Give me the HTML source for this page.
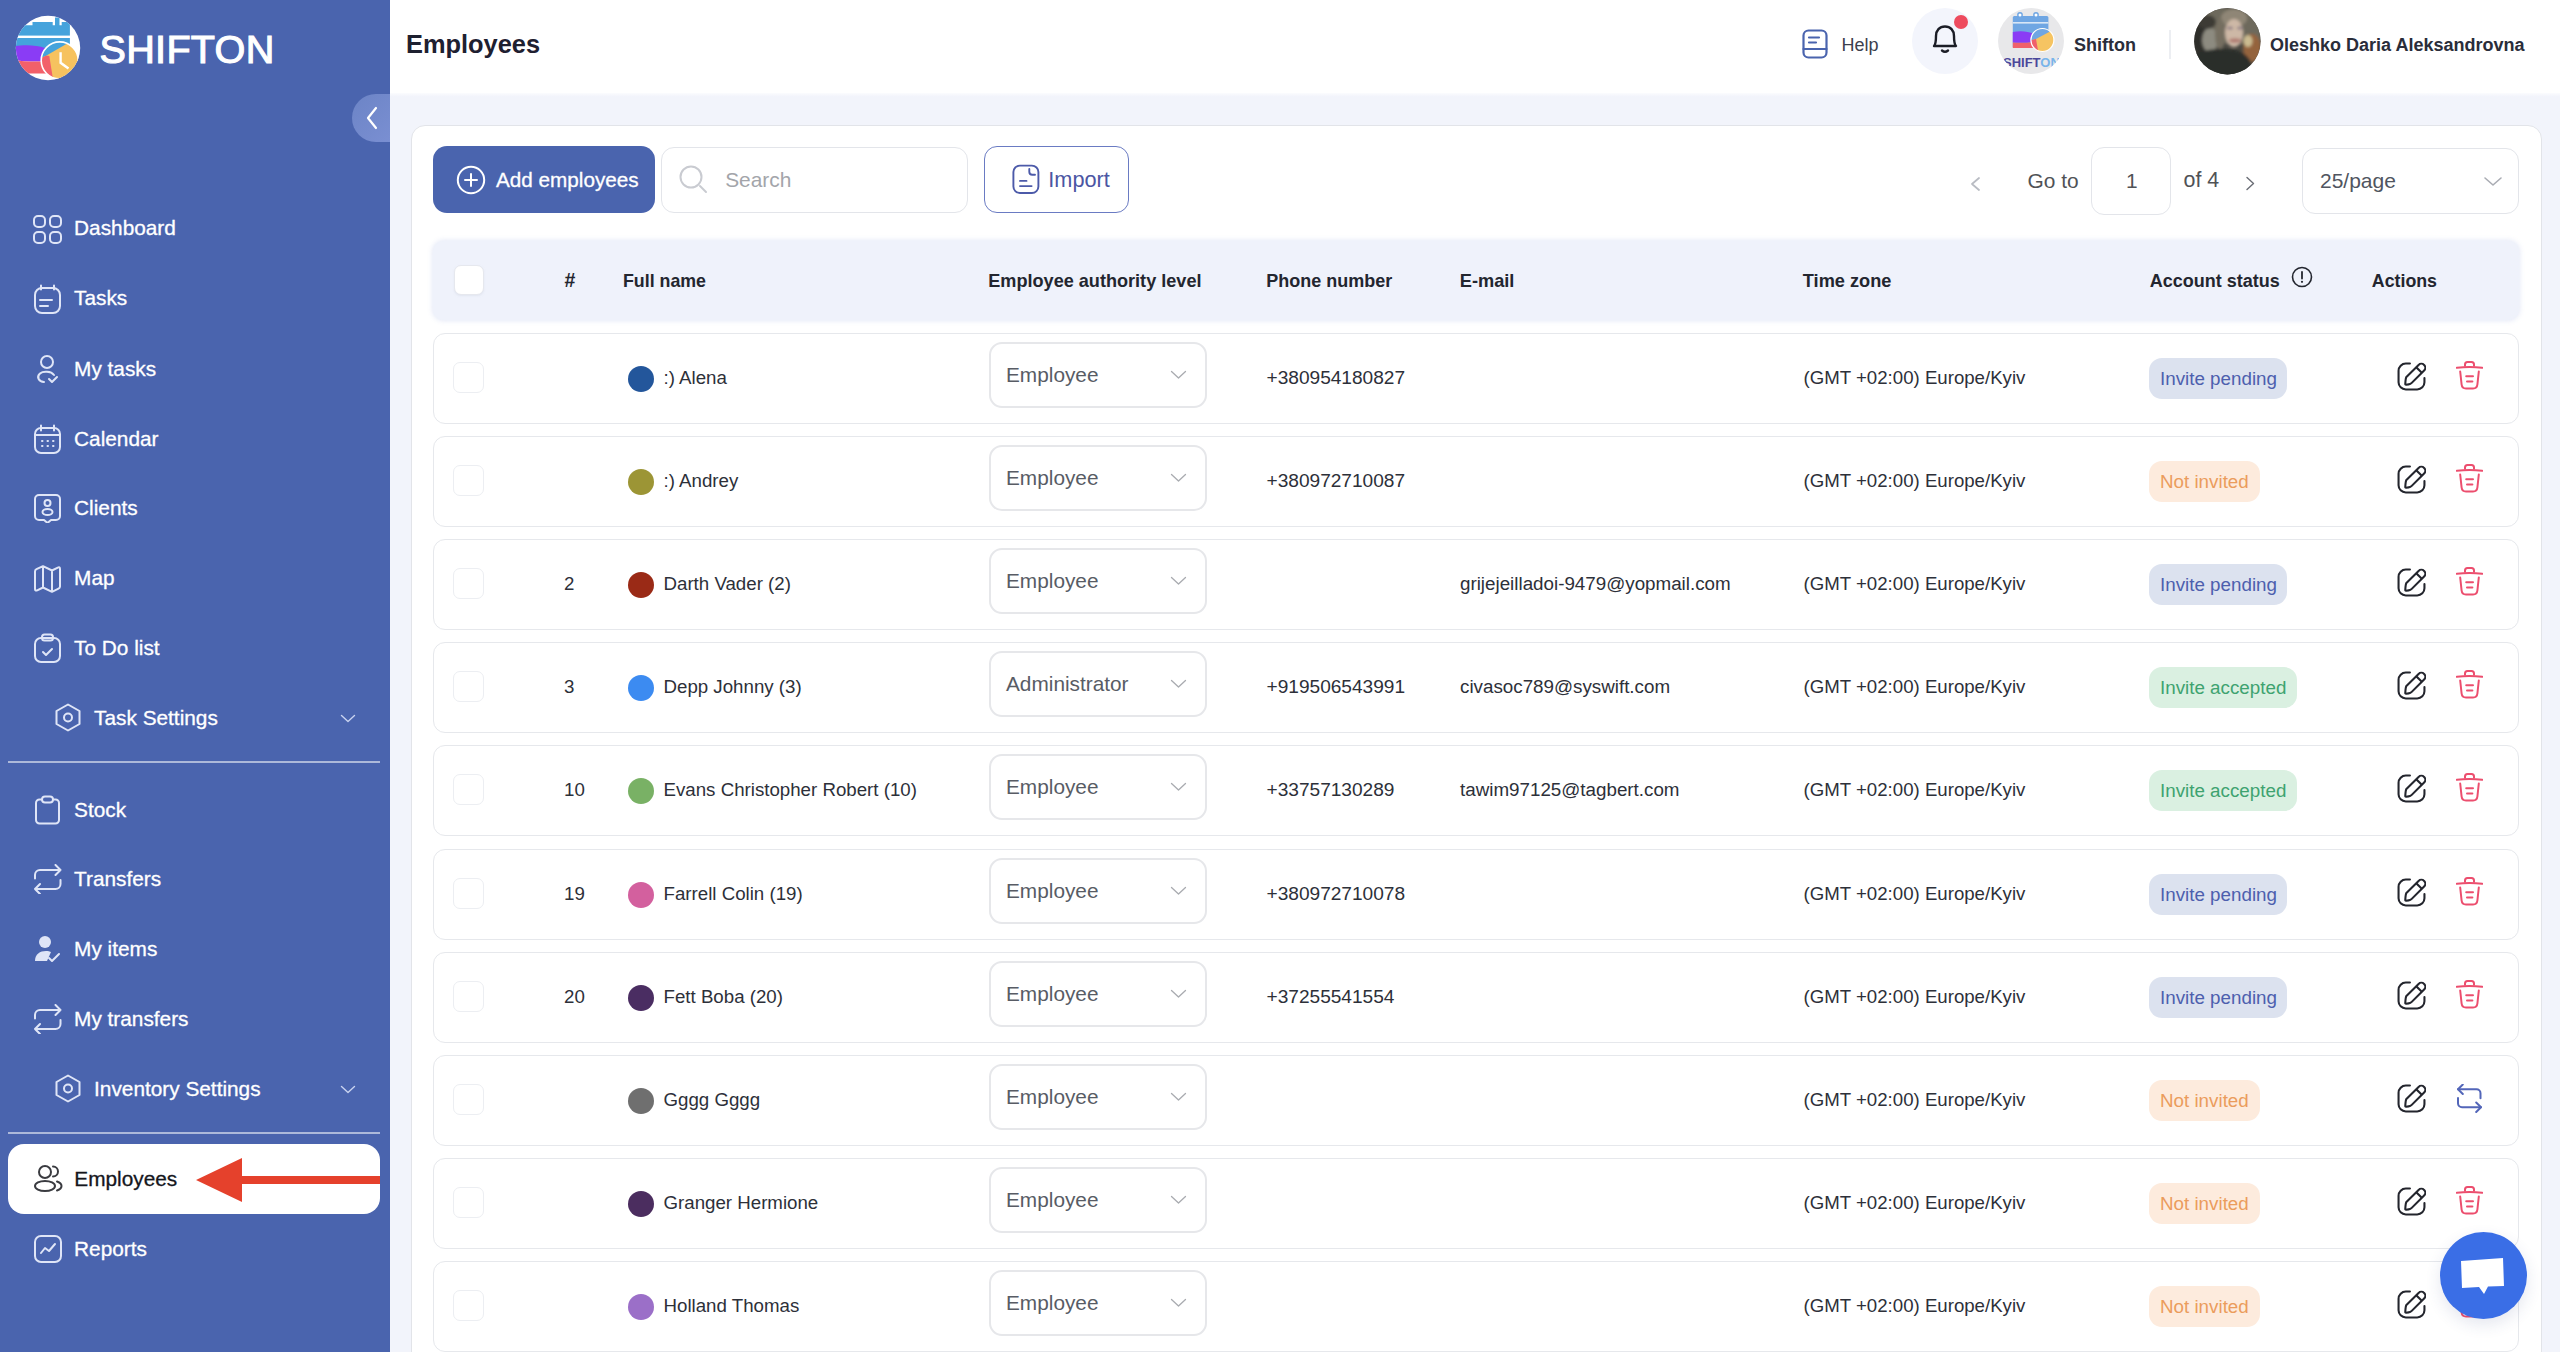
<!DOCTYPE html>
<html><head><meta charset="utf-8"><title>Employees</title>
<style>
html,body{margin:0;padding:0;width:2560px;height:1352px;overflow:hidden;background:#f2f4fb;}
body{position:relative;font-family:"Liberation Sans",sans-serif;}
.t{position:absolute;white-space:nowrap;}
svg{display:block}
</style></head><body>
<div style="position:absolute;left:0px;top:0px;width:390px;height:1352px;background:#4a64ae"></div>
<svg style="position:absolute;left:15px;top:15px;" width="66" height="66" viewBox="0 0 66 66" fill="none">
<defs><clipPath id="lc"><circle cx="33" cy="33" r="32.2"/></clipPath><clipPath id="cc"><circle cx="44.7" cy="45.4" r="18.5"/></clipPath></defs>
<circle cx="33" cy="33" r="32.2" fill="#fff"/>
<g clip-path="url(#lc)">
<path d="M0 10.2 H17.5 V7 H37.7 V10.2 H40 V2.6 H44.5 V10.2 H46.7 V7 H54.9 V34 H0 Z" fill="#45a3dc"/>
<rect x="0" y="20.6" width="55" height="2.4" fill="#fff"/>
<path d="M-1 31.5 C8 29.5 22 30 30 33 L31 46 C20 47 8 46.5 -1 45 Z" fill="#8a3cf5"/>
<path d="M-1 45 C8 46.5 20 47 31 46 L31 58.5 H-1 Z" fill="#f2606a"/>
</g>
<g clip-path="url(#lc)"><g clip-path="url(#cc)">
<rect x="24" y="25" width="42" height="42" fill="#f6c25f"/>
<path d="M24 25 H55 L51.8 28.7 L31.5 40.5 L24 44 Z" fill="#45a3dc"/>
<path d="M24 44 L31.5 40.5 L34.3 41 L38.3 66 H24 Z" fill="#f2606a"/>
</g></g>
<g clip-path="url(#lc)"><circle cx="44.7" cy="45.4" r="18.5" stroke="#fff" stroke-width="1.6" fill="none"/>
<path d="M45.6 37.2 V47.8 L53.5 53.5" stroke="#fff" stroke-width="2.4" fill="none"/></g>
</svg>
<div class="t" style="left:99.5px;top:10.0px;font-size:39.6px;line-height:79.2px;color:#ffffff;font-weight:400;-webkit-text-stroke:1.1px #fff;letter-spacing:0.3px">SHIFTON</div>
<div style="position:absolute;left:352px;top:94px;width:38px;height:48px;background:linear-gradient(135deg,#6c84c6,#7a8fd2);border-radius:24px 0 0 24px"></div>
<svg style="position:absolute;left:364px;top:106px;" width="16" height="24" viewBox="0 0 16 24" fill="none"><path d="M12 2 L4 12 L12 22" stroke="#fff" stroke-width="2.2" stroke-linecap="round" stroke-linejoin="round"/></svg>
<svg style="position:absolute;left:33px;top:215px;" width="30" height="30" viewBox="0 0 30 30" fill="none"><rect x="1" y="1" width="11" height="11" rx="4" stroke="#dfe5f7" stroke-width="2" stroke-linecap="round" stroke-linejoin="round"/><rect x="17" y="1" width="11" height="11" rx="4" stroke="#dfe5f7" stroke-width="2" stroke-linecap="round" stroke-linejoin="round"/><rect x="1" y="17" width="11" height="11" rx="4" stroke="#dfe5f7" stroke-width="2" stroke-linecap="round" stroke-linejoin="round"/><rect x="17" y="17" width="11" height="11" rx="4" stroke="#dfe5f7" stroke-width="2" stroke-linecap="round" stroke-linejoin="round"/></svg>
<div class="t" style="left:74.1px;top:207.3px;font-size:20.8px;line-height:41.6px;color:#ffffff;font-weight:400;-webkit-text-stroke:0.3px #fff">Dashboard</div>
<svg style="position:absolute;left:33px;top:284px;" width="30" height="30" viewBox="0 0 30 30" fill="none"><rect x="2" y="4" width="25" height="25" rx="7" stroke="#dfe5f7" stroke-width="2" stroke-linecap="round" stroke-linejoin="round"/><path d="M8 1.5v4M21 1.5v4M7 16h12M7 22h8" stroke="#dfe5f7" stroke-width="2" stroke-linecap="round" stroke-linejoin="round"/></svg>
<div class="t" style="left:74.1px;top:277.2px;font-size:20.8px;line-height:41.6px;color:#ffffff;font-weight:400;-webkit-text-stroke:0.3px #fff">Tasks</div>
<svg style="position:absolute;left:33px;top:354px;" width="30" height="30" viewBox="0 0 30 30" fill="none"><circle cx="14" cy="8" r="6" stroke="#dfe5f7" stroke-width="2" stroke-linecap="round" stroke-linejoin="round"/><path d="M21 21 C18 17 10 17 7 19.5 C3 23 6 28 11 28" stroke="#dfe5f7" stroke-width="2" stroke-linecap="round" stroke-linejoin="round"/><path d="M16 25l3 3 5-5" stroke="#dfe5f7" stroke-width="2" stroke-linecap="round" stroke-linejoin="round"/></svg>
<div class="t" style="left:74.1px;top:347.5px;font-size:20.8px;line-height:41.6px;color:#ffffff;font-weight:400;-webkit-text-stroke:0.3px #fff">My tasks</div>
<svg style="position:absolute;left:33px;top:424px;" width="30" height="30" viewBox="0 0 30 30" fill="none"><rect x="2" y="4" width="25" height="25" rx="6" stroke="#dfe5f7" stroke-width="2" stroke-linecap="round" stroke-linejoin="round"/><path d="M8 1.5v5M21 1.5v5M2 11h25" stroke="#dfe5f7" stroke-width="2" stroke-linecap="round" stroke-linejoin="round"/><path d="M9 17h.5M14.5 17h.5M20 17h.5M9 22h.5M14.5 22h.5M20 22h.5" stroke="#dfe5f7" stroke-width="2" stroke-linecap="round" stroke-linejoin="round" stroke-width="2.5"/></svg>
<div class="t" style="left:74.1px;top:417.5px;font-size:20.8px;line-height:41.6px;color:#ffffff;font-weight:400;-webkit-text-stroke:0.3px #fff">Calendar</div>
<svg style="position:absolute;left:33px;top:493px;" width="30" height="30" viewBox="0 0 30 30" fill="none"><path d="M6 2h17a4 4 0 0 1 4 4v17a4 4 0 0 1-4 4h-5l-3.5 3-3.5-3H6a4 4 0 0 1-4-4V6a4 4 0 0 1 4-4z" stroke="#dfe5f7" stroke-width="2" stroke-linecap="round" stroke-linejoin="round"/><circle cx="14.5" cy="10" r="3" stroke="#dfe5f7" stroke-width="2" stroke-linecap="round" stroke-linejoin="round"/><ellipse cx="14.5" cy="19" rx="5" ry="3" stroke="#dfe5f7" stroke-width="2" stroke-linecap="round" stroke-linejoin="round"/></svg>
<div class="t" style="left:74.1px;top:486.8px;font-size:20.8px;line-height:41.6px;color:#ffffff;font-weight:400;-webkit-text-stroke:0.3px #fff">Clients</div>
<svg style="position:absolute;left:33px;top:563.5px;" width="30" height="30" viewBox="0 0 30 30" fill="none"><path d="M2 7.5 Q2 6 3.5 5.2 L10 2.2 L19 6.5 L24.8 3.6 Q27 2.6 27 5 V22.5 Q27 24 25.5 24.7 L19 27.8 L10 23.5 L4.2 26.3 Q2 27.3 2 25 Z M10 2.2 V23.5 M19 6.5 V27.8" stroke="#dfe5f7" stroke-width="2" stroke-linecap="round" stroke-linejoin="round"/></svg>
<div class="t" style="left:74.1px;top:556.5px;font-size:20.8px;line-height:41.6px;color:#ffffff;font-weight:400;-webkit-text-stroke:0.3px #fff">Map</div>
<svg style="position:absolute;left:33px;top:633px;" width="30" height="30" viewBox="0 0 30 30" fill="none"><rect x="2" y="5" width="25" height="24" rx="6" stroke="#dfe5f7" stroke-width="2" stroke-linecap="round" stroke-linejoin="round"/><rect x="9" y="1.5" width="11" height="6" rx="2.5" stroke="#dfe5f7" stroke-width="2" stroke-linecap="round" stroke-linejoin="round"/><path d="M10 19l3 3 6-6" stroke="#dfe5f7" stroke-width="2" stroke-linecap="round" stroke-linejoin="round"/></svg>
<div class="t" style="left:74.1px;top:626.5px;font-size:20.8px;line-height:41.6px;color:#ffffff;font-weight:400;-webkit-text-stroke:0.3px #fff">To Do list</div>
<svg style="position:absolute;left:54px;top:703px;" width="30" height="30" viewBox="0 0 30 30" fill="none"><path d="M14 1.5 L25.5 8 V21 L14 27.5 L2.5 21 V8 Z" stroke="#dfe5f7" stroke-width="2" stroke-linecap="round" stroke-linejoin="round"/><circle cx="14" cy="14.5" r="4" stroke="#dfe5f7" stroke-width="2" stroke-linecap="round" stroke-linejoin="round"/></svg>
<div class="t" style="left:94.1px;top:696.5px;font-size:20.8px;line-height:41.6px;color:#ffffff;font-weight:400;-webkit-text-stroke:0.3px #fff">Task Settings</div>
<svg style="position:absolute;left:33px;top:795px;" width="30" height="30" viewBox="0 0 30 30" fill="none"><path d="M9 4.5 H6.5 a3.5 3.5 0 0 0 -3.5 3.5 V25 a3.5 3.5 0 0 0 3.5 3.5 H22.5 a3.5 3.5 0 0 0 3.5 -3.5 V8 a3.5 3.5 0 0 0 -3.5 -3.5 H20" stroke="#dfe5f7" stroke-width="2" stroke-linecap="round" stroke-linejoin="round"/><rect x="9" y="1.5" width="11" height="6" rx="3" stroke="#dfe5f7" stroke-width="2" stroke-linecap="round" stroke-linejoin="round"/></svg>
<div class="t" style="left:74.1px;top:789.0px;font-size:20.8px;line-height:41.6px;color:#ffffff;font-weight:400;-webkit-text-stroke:0.3px #fff">Stock</div>
<svg style="position:absolute;left:33px;top:864px;" width="30" height="30" viewBox="0 0 30 30" fill="none"><path d="M2 14.5 V11 a5 5 0 0 1 5-5 H27.5 M22.5 1 L27.5 6 L22.5 11 M27.5 16 V20 a5 5 0 0 1 -5 5 H2 M7 20 L2 25 L7 30" stroke="#dfe5f7" stroke-width="2" stroke-linecap="round" stroke-linejoin="round"/></svg>
<div class="t" style="left:74.1px;top:858.0px;font-size:20.8px;line-height:41.6px;color:#ffffff;font-weight:400;-webkit-text-stroke:0.3px #fff">Transfers</div>
<svg style="position:absolute;left:33px;top:934px;" width="30" height="30" viewBox="0 0 30 30" fill="none"><circle cx="12" cy="8" r="6" fill="#dfe5f7"/><path d="M2 27 C2 20 7 17 13 17 C15 17 17 17.5 18 18 L14 27 Z" fill="#dfe5f7"/><path d="M16 24l3 3 7-7" stroke="#dfe5f7" stroke-width="2" stroke-linecap="round" stroke-linejoin="round"/></svg>
<div class="t" style="left:74.1px;top:927.5px;font-size:20.8px;line-height:41.6px;color:#ffffff;font-weight:400;-webkit-text-stroke:0.3px #fff">My items</div>
<svg style="position:absolute;left:33px;top:1004px;" width="30" height="30" viewBox="0 0 30 30" fill="none"><path d="M2 14.5 V11 a5 5 0 0 1 5-5 H27.5 M22.5 1 L27.5 6 L22.5 11 M27.5 16 V20 a5 5 0 0 1 -5 5 H2 M7 20 L2 25 L7 30" stroke="#dfe5f7" stroke-width="2" stroke-linecap="round" stroke-linejoin="round"/></svg>
<div class="t" style="left:74.1px;top:998.0px;font-size:20.8px;line-height:41.6px;color:#ffffff;font-weight:400;-webkit-text-stroke:0.3px #fff">My transfers</div>
<svg style="position:absolute;left:54px;top:1074px;" width="30" height="30" viewBox="0 0 30 30" fill="none"><path d="M14 1.5 L25.5 8 V21 L14 27.5 L2.5 21 V8 Z" stroke="#dfe5f7" stroke-width="2" stroke-linecap="round" stroke-linejoin="round"/><circle cx="14" cy="14.5" r="4" stroke="#dfe5f7" stroke-width="2" stroke-linecap="round" stroke-linejoin="round"/></svg>
<div class="t" style="left:94.1px;top:1068.0px;font-size:20.8px;line-height:41.6px;color:#ffffff;font-weight:400;-webkit-text-stroke:0.3px #fff">Inventory Settings</div>
<svg style="position:absolute;left:33px;top:1234px;" width="30" height="30" viewBox="0 0 30 30" fill="none"><rect x="2" y="2" width="26" height="26" rx="6" stroke="#dfe5f7" stroke-width="2" stroke-linecap="round" stroke-linejoin="round"/><path d="M8 19 L12 14 L16 17 L22 10" stroke="#dfe5f7" stroke-width="2" stroke-linecap="round" stroke-linejoin="round"/></svg>
<div class="t" style="left:74.1px;top:1228.0px;font-size:20.8px;line-height:41.6px;color:#ffffff;font-weight:400;-webkit-text-stroke:0.3px #fff">Reports</div>
<svg style="position:absolute;left:340px;top:714px;" width="16" height="9" viewBox="0 0 16 9" fill="none"><path d="M1.5 1.5 L8 7.5 L14.5 1.5" stroke="#c9d3f0" stroke-width="1.4" stroke-linecap="round" stroke-linejoin="round"/></svg>
<svg style="position:absolute;left:340px;top:1085px;" width="16" height="9" viewBox="0 0 16 9" fill="none"><path d="M1.5 1.5 L8 7.5 L14.5 1.5" stroke="#c9d3f0" stroke-width="1.4" stroke-linecap="round" stroke-linejoin="round"/></svg>
<div style="position:absolute;left:8px;top:761px;width:372px;height:2px;background:rgba(255,255,255,0.55)"></div>
<div style="position:absolute;left:8px;top:1132px;width:372px;height:2px;background:rgba(255,255,255,0.55)"></div>
<div style="position:absolute;left:8px;top:1144px;width:372px;height:70px;background:#fff;border-radius:16px"></div>
<svg style="position:absolute;left:33px;top:1163px;" width="30" height="30" viewBox="0 0 30 30" fill="none"><circle cx="12" cy="9" r="6" stroke="#3a3b40" stroke-width="2" stroke-linecap="round" stroke-linejoin="round"/><ellipse cx="12" cy="23" rx="10" ry="5" stroke="#3a3b40" stroke-width="2" stroke-linecap="round" stroke-linejoin="round"/><path d="M20 3.5a5 5 0 0 1 0 10M24 18.5c3 1 4.5 3 4.5 4.5s-1.5 3.5-4.5 4.5" stroke="#3a3b40" stroke-width="2" stroke-linecap="round" stroke-linejoin="round"/></svg>
<div class="t" style="left:74.3px;top:1158.0px;font-size:20.8px;line-height:41.6px;color:#15161c;font-weight:400;-webkit-text-stroke:0.3px #15161c">Employees</div>
<svg style="position:absolute;left:196px;top:1155px;" width="184" height="50" viewBox="0 0 184 50" fill="none"><path d="M0 25 L46 3 L46 21 L184 21 L184 29 L46 29 L46 47 Z" fill="#e5412c"/></svg>
<div style="position:absolute;left:390px;top:0px;width:2170px;height:94px;background:#fff"></div>
<div style="position:absolute;left:390px;top:94px;width:2170px;height:1258px;background:#f2f4fb"></div>
<div style="position:absolute;left:390px;top:93px;width:2170px;height:4px;background:linear-gradient(#fbfcfe,#f1f3fb)"></div>
<div class="t" style="left:406.0px;top:19.1px;font-size:25.4px;line-height:50.8px;color:#1e2030;font-weight:700;">Employees</div>
<svg style="position:absolute;left:1802px;top:29px;" width="28" height="30" viewBox="0 0 28 30" fill="none"><rect x="1.5" y="1.5" width="23" height="27" rx="5" stroke="#4a64ae" stroke-width="2.2"/><path d="M7 8.5h10M7 13.5h7M1.5 20h23" stroke="#4a64ae" stroke-width="2.2" stroke-linecap="round"/></svg>
<div class="t" style="left:1841.5px;top:27.3px;font-size:18px;line-height:36px;color:#3c404d;font-weight:400;">Help</div>
<div style="position:absolute;left:1912px;top:8px;width:66px;height:66px;background:#f3f5fc;border-radius:50%"></div>
<svg style="position:absolute;left:1930px;top:22px;" width="30" height="34" viewBox="0 0 30 34" fill="none"><path d="M4 24 C6 22 6 19 6 14 C6 8.5 9.5 4.5 15 4.5 C20.5 4.5 24 8.5 24 14 C24 19 24 22 26 24 Z" stroke="#1b1d26" stroke-width="2.4" stroke-linejoin="round"/><path d="M12 28.5 Q15 31 18 28.5" stroke="#1b1d26" stroke-width="2.4" stroke-linecap="round"/></svg>
<div style="position:absolute;left:1954px;top:15px;width:14px;height:14px;background:#ee4b5e;border-radius:50%"></div>
<svg style="position:absolute;left:1998px;top:8px;" width="66" height="66" viewBox="0 0 66 66" fill="none"><defs><clipPath id="ac"><circle cx="33" cy="33" r="33"/></clipPath><clipPath id="ac2"><circle cx="44.4" cy="32" r="11.5"/></clipPath></defs>
<circle cx="33" cy="33" r="33" fill="#e8e8ea"/><g clip-path="url(#ac)">
<rect x="14.8" y="8" width="35.6" height="32" rx="1.5" fill="#6fa6e3"/>
<rect x="14.8" y="14" width="35.6" height="1.6" fill="#d8e6f6"/>
<circle cx="22" cy="7" r="2.2" stroke="#6fa6e3" stroke-width="1.4" fill="#fff"/><circle cx="38" cy="7" r="2.2" stroke="#6fa6e3" stroke-width="1.4" fill="#fff"/>
<path d="M14.8 24 C22 22.5 30 23 36 26 L36 34 C28 35 20 35 14.8 34.5 Z" fill="#8a3cf5"/>
<path d="M14.8 34.5 C20 35 28 35 36 34 L36 40 L14.8 40 Z" fill="#f0606b"/>
<g clip-path="url(#ac2)"><rect x="30" y="18" width="30" height="30" fill="#f6c462"/><path d="M30 18 H56 L53 23 L38 31 L30 33 Z" fill="#6fa6e3"/><path d="M30 33 L38 31 L41 48 H30 Z" fill="#f0606b"/></g>
<circle cx="44.4" cy="32" r="11.5" stroke="#fff" stroke-width="1.2" fill="none"/>
<text x="5" y="59" font-family="Liberation Sans" font-weight="700" font-size="13" fill="#4b479a">SHIFT<tspan fill="#78b4ea">ON</tspan></text></g></svg>
<div class="t" style="left:2074.0px;top:27.3px;font-size:18px;line-height:36px;color:#2a2d3a;font-weight:700;">Shifton</div>
<div style="position:absolute;left:2169px;top:30px;width:2px;height:29px;background:#eceef2"></div>
<svg style="position:absolute;left:2194px;top:8px;" width="67" height="67" viewBox="0 0 67 67" fill="none"><defs><clipPath id="uc"><circle cx="33.4" cy="33.2" r="33.2"/></clipPath>
<filter id="ub" x="-20%" y="-20%" width="140%" height="140%"><feGaussianBlur stdDeviation="1.8"/></filter></defs>
<g clip-path="url(#uc)"><rect width="67" height="67" fill="#4a4842"/>
<g filter="url(#ub)">
<rect x="0" y="0" width="67" height="36" fill="#6d695c"/>
<ellipse cx="6" cy="30" rx="8" ry="16" fill="#2f2e2a"/>
<ellipse cx="16" cy="32" rx="8" ry="12" fill="#8d8b80"/>
<ellipse cx="13" cy="14" rx="9" ry="7" fill="#3c3b36"/>
<ellipse cx="40" cy="10" rx="13" ry="9" fill="#8f8676"/>
<ellipse cx="26" cy="26" rx="5" ry="16" fill="#756e60"/>
<ellipse cx="40" cy="25" rx="9" ry="14" fill="#cdb8a6"/>
<ellipse cx="36" cy="20" rx="3" ry="1.5" fill="#8f7f86"/><ellipse cx="46" cy="20" rx="3" ry="1.5" fill="#8f7f86"/>
<ellipse cx="41" cy="32.5" rx="6" ry="2.3" fill="#b07c72"/>
<ellipse cx="58" cy="40" rx="9" ry="14" fill="#94633c"/>
<ellipse cx="54" cy="33" rx="4.5" ry="6" fill="#cbbb90"/>
<path d="M-5 70 L-5 48 C8 42 22 40 34 41 C44 41 51 45 56 52 L60 70 Z" fill="#2c2d29"/>
</g></g></svg>
<div class="t" style="left:2270.0px;top:27.3px;font-size:18px;line-height:36px;color:#2a2d3a;font-weight:700;">Oleshko Daria Aleksandrovna</div>
<div style="position:absolute;left:411px;top:125px;width:2131px;height:1300px;background:#fff;border:1.5px solid #e2e4e9;border-radius:14px;box-sizing:border-box"></div>
<div style="position:absolute;left:433px;top:146px;width:222px;height:67px;background:#4a64ae;border-radius:14px"></div>
<svg style="position:absolute;left:456px;top:165px;" width="30" height="30" viewBox="0 0 30 30" fill="none"><circle cx="15" cy="15" r="13.2" stroke="#fff" stroke-width="2"/><path d="M15 9v12M9 15h12" stroke="#fff" stroke-width="2" stroke-linecap="round"/></svg>
<div class="t" style="left:496.0px;top:158.6px;font-size:20.7px;line-height:41.4px;color:#ffffff;font-weight:400;-webkit-text-stroke:0.3px #fff">Add employees</div>
<div style="position:absolute;left:661px;top:147px;width:307px;height:66px;background:#fff;border:1.5px solid #e3e5ea;border-radius:13px;box-sizing:border-box"></div>
<svg style="position:absolute;left:678px;top:164px;" width="32" height="32" viewBox="0 0 32 32" fill="none"><circle cx="13" cy="13" r="10.5" stroke="#c9cbd1" stroke-width="2"/><path d="M22 22 L28 28" stroke="#c9cbd1" stroke-width="2" stroke-linecap="round"/></svg>
<div class="t" style="left:725.2px;top:158.7px;font-size:20.9px;line-height:41.8px;color:#a3a5aa;font-weight:400;">Search</div>
<div style="position:absolute;left:984px;top:146px;width:145px;height:67px;background:#fff;border:1.6px solid #6a7bc3;border-radius:13px;box-sizing:border-box"></div>
<svg style="position:absolute;left:1011px;top:164px;" width="30" height="30" viewBox="0 0 30 30" fill="none"><rect x="2.4" y="1.6" width="25" height="27.4" rx="6.5" stroke="#4c5aa9" stroke-width="1.9"/><path d="M18.3 5 V7.8 a3 3 0 0 0 3 3 H24" stroke="#4c5aa9" stroke-width="1.9" stroke-linecap="round"/><path d="M9 16.9h6.5M9 22.1h11.6" stroke="#4c5aa9" stroke-width="1.9" stroke-linecap="round"/></svg>
<div class="t" style="left:1048.3px;top:157.6px;font-size:21.7px;line-height:43.4px;color:#4b56a3;font-weight:400;">Import</div>
<svg style="position:absolute;left:1968px;top:176px;" width="14" height="16" viewBox="0 0 14 16" fill="none"><path d="M11 2 L4 8 L11 14" stroke="#b9bcc3" stroke-width="1.8" stroke-linecap="round" stroke-linejoin="round"/></svg>
<div class="t" style="left:2027.5px;top:160.3px;font-size:20.9px;line-height:41.8px;color:#505256;font-weight:400;">Go to</div>
<div style="position:absolute;left:2091px;top:147px;width:80px;height:68px;background:#fff;border:1.5px solid #e3e5ea;border-radius:13px;box-sizing:border-box"></div>
<div class="t" style="left:2126.0px;top:160.3px;font-size:20.9px;line-height:41.8px;color:#505256;font-weight:400;">1</div>
<div class="t" style="left:2183.5px;top:159.4px;font-size:21.4px;line-height:42.8px;color:#505256;font-weight:400;">of 4</div>
<svg style="position:absolute;left:2244px;top:176px;" width="14" height="16" viewBox="0 0 14 16" fill="none"><path d="M3 1.5 L9.5 7.5 L3 13.5" stroke="#6a6d75" stroke-width="1.4" stroke-linecap="round" stroke-linejoin="round"/></svg>
<div style="position:absolute;left:2302px;top:148px;width:217px;height:66px;background:#fff;border:1.5px solid #e3e5ea;border-radius:13px;box-sizing:border-box"></div>
<div class="t" style="left:2320.0px;top:159.5px;font-size:21px;line-height:42px;color:#505560;font-weight:400;">25/page</div>
<svg style="position:absolute;left:2483px;top:175px;" width="20" height="14" viewBox="0 0 20 14" fill="none"><path d="M2 3 L10 10 L18 3" stroke="#a9acb3" stroke-width="1.6" stroke-linecap="round" stroke-linejoin="round"/></svg>
<div style="position:absolute;left:433px;top:241px;width:2086px;height:79px;background:#eff2fb;border-radius:11px;box-shadow:0 0 5px 1px rgba(226,231,246,0.9)"></div>
<div style="position:absolute;left:454px;top:265px;width:30px;height:30px;background:#fff;border:1px solid #e6e8ee;border-radius:7px;box-sizing:border-box;box-shadow:0 1px 2px rgba(200,205,220,0.35)"></div>
<div class="t" style="left:564.5px;top:261.2px;font-size:19.5px;line-height:39.0px;color:#23262f;font-weight:700;">#</div>
<div class="t" style="left:623.0px;top:263.5px;font-size:17.8px;line-height:35.6px;color:#23262f;font-weight:700;">Full name</div>
<div class="t" style="left:988.3px;top:263.1px;font-size:18.1px;line-height:36.2px;color:#23262f;font-weight:700;">Employee authority level</div>
<div class="t" style="left:1266.3px;top:263.3px;font-size:18px;line-height:36px;color:#23262f;font-weight:700;">Phone number</div>
<div class="t" style="left:1459.8px;top:263.0px;font-size:18.2px;line-height:36.4px;color:#23262f;font-weight:700;">E-mail</div>
<div class="t" style="left:1802.8px;top:263.0px;font-size:18.2px;line-height:36.4px;color:#23262f;font-weight:700;">Time zone</div>
<div class="t" style="left:2149.8px;top:263.3px;font-size:18px;line-height:36px;color:#23262f;font-weight:700;">Account status</div>
<div class="t" style="left:2371.8px;top:263.5px;font-size:17.8px;line-height:35.6px;color:#23262f;font-weight:700;">Actions</div>
<svg style="position:absolute;left:2291px;top:266px;" width="22" height="22" viewBox="0 0 22 22" fill="none"><circle cx="11" cy="11" r="9.5" stroke="#23262f" stroke-width="1.6"/><path d="M11 6v6.5" stroke="#23262f" stroke-width="1.8" stroke-linecap="round"/><circle cx="11" cy="15.8" r="1.1" fill="#23262f"/></svg>
<div style="position:absolute;left:433px;top:333px;width:2086px;height:91px;background:#fff;border:1.6px solid #e6e8ec;border-radius:12px;box-sizing:border-box"></div>
<div style="position:absolute;left:453px;top:362px;width:31px;height:31px;background:#fff;border:1.5px solid #eceef2;border-radius:7px;box-sizing:border-box"></div>
<div style="position:absolute;left:628px;top:365.5px;width:26px;height:26px;background:#23569b;border-radius:50%"></div>
<div class="t" style="left:663.5px;top:358.8px;font-size:18.7px;line-height:37.4px;color:#2d3039;font-weight:400;">:) Alena</div>
<div style="position:absolute;left:989px;top:342px;width:218px;height:66px;background:#fff;border:2px solid #e6e7ea;border-radius:13px;box-sizing:border-box"></div>
<div class="t" style="left:1006.0px;top:354.0px;font-size:20.8px;line-height:41.6px;color:#585c65;font-weight:400;">Employee</div>
<svg style="position:absolute;left:1170px;top:369.5px;" width="18" height="10" viewBox="0 0 18 10" fill="none"><path d="M1.5 1.5 L8.5 8 L15.5 1.5" stroke="#a9abb0" stroke-width="1.3" stroke-linecap="round" stroke-linejoin="round"/></svg>
<div class="t" style="left:1266.5px;top:359.3px;font-size:19.1px;line-height:38.2px;color:#2d3039;font-weight:400;">+380954180827</div>
<div class="t" style="left:1803.5px;top:358.9px;font-size:18.65px;line-height:37.3px;color:#2d3039;font-weight:400;">(GMT +02:00) Europe/Kyiv</div>
<div style="position:absolute;left:2149px;top:358px;width:138px;height:41px;background:#dce2ef;border-radius:13px"></div>
<div class="t" style="left:2160.0px;top:359.7px;font-size:18.8px;line-height:37.6px;color:#4d5fae;font-weight:400;">Invite pending</div>
<svg style="position:absolute;left:2397px;top:362px;" width="29" height="29" viewBox="0 0 28 28" fill="none"><path d="M12.5 1.5 H8.5 A7 7 0 0 0 1.5 8.5 V19.5 A7 7 0 0 0 8.5 26.5 H19.5 A7 7 0 0 0 26.5 19.5 V15.5" stroke="#23252d" stroke-width="2" stroke-linecap="round"/><path d="M8.85 14.77 L20.81 2.81 A3.8 3.8 0 0 1 26.19 8.19 L14.23 20.15 Q13 21.4 11.2 21.6 L8.8 21.9 Q7.9 22 8 21.1 L8.2 18.5 Q8.4 16 8.85 14.77 Z" stroke="#23252d" stroke-width="2" stroke-linejoin="round"/><path d="M18.58 5.04 L23.96 10.42" stroke="#23252d" stroke-width="2"/></svg>
<svg style="position:absolute;left:2456px;top:361px;" width="27" height="29" viewBox="0 0 27 29" fill="none"><path d="M0.8 6.8 Q13.5 5.2 26.2 6.8" stroke="#ec4e6e" stroke-width="2" stroke-linecap="round"/><path d="M9 5.6 V3.5 Q9 1 11.5 1 H15.5 Q18 1 18 3.5 V5.6" stroke="#ec4e6e" stroke-width="2"/><path d="M4.2 10.5 L5.6 23.5 Q6 27.5 10 27.5 H17 Q21 27.5 21.4 23.5 L22.8 10.5" stroke="#ec4e6e" stroke-width="2" stroke-linecap="round"/><path d="M10.2 15.3h6.8M11 20.5h5.4" stroke="#ec4e6e" stroke-width="2" stroke-linecap="round"/></svg>
<div style="position:absolute;left:433px;top:436px;width:2086px;height:91px;background:#fff;border:1.6px solid #e6e8ec;border-radius:12px;box-sizing:border-box"></div>
<div style="position:absolute;left:453px;top:465px;width:31px;height:31px;background:#fff;border:1.5px solid #eceef2;border-radius:7px;box-sizing:border-box"></div>
<div style="position:absolute;left:628px;top:468.5px;width:26px;height:26px;background:#9c9535;border-radius:50%"></div>
<div class="t" style="left:663.5px;top:461.8px;font-size:18.7px;line-height:37.4px;color:#2d3039;font-weight:400;">:) Andrey</div>
<div style="position:absolute;left:989px;top:445px;width:218px;height:66px;background:#fff;border:2px solid #e6e7ea;border-radius:13px;box-sizing:border-box"></div>
<div class="t" style="left:1006.0px;top:457.0px;font-size:20.8px;line-height:41.6px;color:#585c65;font-weight:400;">Employee</div>
<svg style="position:absolute;left:1170px;top:472.5px;" width="18" height="10" viewBox="0 0 18 10" fill="none"><path d="M1.5 1.5 L8.5 8 L15.5 1.5" stroke="#a9abb0" stroke-width="1.3" stroke-linecap="round" stroke-linejoin="round"/></svg>
<div class="t" style="left:1266.5px;top:462.3px;font-size:19.1px;line-height:38.2px;color:#2d3039;font-weight:400;">+380972710087</div>
<div class="t" style="left:1803.5px;top:461.9px;font-size:18.65px;line-height:37.3px;color:#2d3039;font-weight:400;">(GMT +02:00) Europe/Kyiv</div>
<div style="position:absolute;left:2149px;top:461px;width:111px;height:41px;background:#fdebdd;border-radius:13px"></div>
<div class="t" style="left:2160.0px;top:462.7px;font-size:18.8px;line-height:37.6px;color:#eb9c5c;font-weight:400;">Not invited</div>
<svg style="position:absolute;left:2397px;top:465px;" width="29" height="29" viewBox="0 0 28 28" fill="none"><path d="M12.5 1.5 H8.5 A7 7 0 0 0 1.5 8.5 V19.5 A7 7 0 0 0 8.5 26.5 H19.5 A7 7 0 0 0 26.5 19.5 V15.5" stroke="#23252d" stroke-width="2" stroke-linecap="round"/><path d="M8.85 14.77 L20.81 2.81 A3.8 3.8 0 0 1 26.19 8.19 L14.23 20.15 Q13 21.4 11.2 21.6 L8.8 21.9 Q7.9 22 8 21.1 L8.2 18.5 Q8.4 16 8.85 14.77 Z" stroke="#23252d" stroke-width="2" stroke-linejoin="round"/><path d="M18.58 5.04 L23.96 10.42" stroke="#23252d" stroke-width="2"/></svg>
<svg style="position:absolute;left:2456px;top:464px;" width="27" height="29" viewBox="0 0 27 29" fill="none"><path d="M0.8 6.8 Q13.5 5.2 26.2 6.8" stroke="#ec4e6e" stroke-width="2" stroke-linecap="round"/><path d="M9 5.6 V3.5 Q9 1 11.5 1 H15.5 Q18 1 18 3.5 V5.6" stroke="#ec4e6e" stroke-width="2"/><path d="M4.2 10.5 L5.6 23.5 Q6 27.5 10 27.5 H17 Q21 27.5 21.4 23.5 L22.8 10.5" stroke="#ec4e6e" stroke-width="2" stroke-linecap="round"/><path d="M10.2 15.3h6.8M11 20.5h5.4" stroke="#ec4e6e" stroke-width="2" stroke-linecap="round"/></svg>
<div style="position:absolute;left:433px;top:539px;width:2086px;height:91px;background:#fff;border:1.6px solid #e6e8ec;border-radius:12px;box-sizing:border-box"></div>
<div style="position:absolute;left:453px;top:568px;width:31px;height:31px;background:#fff;border:1.5px solid #eceef2;border-radius:7px;box-sizing:border-box"></div>
<div class="t" style="left:564.0px;top:564.8px;font-size:18.7px;line-height:37.4px;color:#2d3039;font-weight:400;">2</div>
<div style="position:absolute;left:628px;top:571.5px;width:26px;height:26px;background:#9a2a16;border-radius:50%"></div>
<div class="t" style="left:663.5px;top:564.8px;font-size:18.7px;line-height:37.4px;color:#2d3039;font-weight:400;">Darth Vader (2)</div>
<div style="position:absolute;left:989px;top:548px;width:218px;height:66px;background:#fff;border:2px solid #e6e7ea;border-radius:13px;box-sizing:border-box"></div>
<div class="t" style="left:1006.0px;top:560.0px;font-size:20.8px;line-height:41.6px;color:#585c65;font-weight:400;">Employee</div>
<svg style="position:absolute;left:1170px;top:575.5px;" width="18" height="10" viewBox="0 0 18 10" fill="none"><path d="M1.5 1.5 L8.5 8 L15.5 1.5" stroke="#a9abb0" stroke-width="1.3" stroke-linecap="round" stroke-linejoin="round"/></svg>
<div class="t" style="left:1460.0px;top:564.7px;font-size:18.8px;line-height:37.6px;color:#2d3039;font-weight:400;">grijejeilladoi-9479@yopmail.com</div>
<div class="t" style="left:1803.5px;top:564.9px;font-size:18.65px;line-height:37.3px;color:#2d3039;font-weight:400;">(GMT +02:00) Europe/Kyiv</div>
<div style="position:absolute;left:2149px;top:564px;width:138px;height:41px;background:#dce2ef;border-radius:13px"></div>
<div class="t" style="left:2160.0px;top:565.7px;font-size:18.8px;line-height:37.6px;color:#4d5fae;font-weight:400;">Invite pending</div>
<svg style="position:absolute;left:2397px;top:568px;" width="29" height="29" viewBox="0 0 28 28" fill="none"><path d="M12.5 1.5 H8.5 A7 7 0 0 0 1.5 8.5 V19.5 A7 7 0 0 0 8.5 26.5 H19.5 A7 7 0 0 0 26.5 19.5 V15.5" stroke="#23252d" stroke-width="2" stroke-linecap="round"/><path d="M8.85 14.77 L20.81 2.81 A3.8 3.8 0 0 1 26.19 8.19 L14.23 20.15 Q13 21.4 11.2 21.6 L8.8 21.9 Q7.9 22 8 21.1 L8.2 18.5 Q8.4 16 8.85 14.77 Z" stroke="#23252d" stroke-width="2" stroke-linejoin="round"/><path d="M18.58 5.04 L23.96 10.42" stroke="#23252d" stroke-width="2"/></svg>
<svg style="position:absolute;left:2456px;top:567px;" width="27" height="29" viewBox="0 0 27 29" fill="none"><path d="M0.8 6.8 Q13.5 5.2 26.2 6.8" stroke="#ec4e6e" stroke-width="2" stroke-linecap="round"/><path d="M9 5.6 V3.5 Q9 1 11.5 1 H15.5 Q18 1 18 3.5 V5.6" stroke="#ec4e6e" stroke-width="2"/><path d="M4.2 10.5 L5.6 23.5 Q6 27.5 10 27.5 H17 Q21 27.5 21.4 23.5 L22.8 10.5" stroke="#ec4e6e" stroke-width="2" stroke-linecap="round"/><path d="M10.2 15.3h6.8M11 20.5h5.4" stroke="#ec4e6e" stroke-width="2" stroke-linecap="round"/></svg>
<div style="position:absolute;left:433px;top:642px;width:2086px;height:91px;background:#fff;border:1.6px solid #e6e8ec;border-radius:12px;box-sizing:border-box"></div>
<div style="position:absolute;left:453px;top:671px;width:31px;height:31px;background:#fff;border:1.5px solid #eceef2;border-radius:7px;box-sizing:border-box"></div>
<div class="t" style="left:564.0px;top:667.8px;font-size:18.7px;line-height:37.4px;color:#2d3039;font-weight:400;">3</div>
<div style="position:absolute;left:628px;top:674.5px;width:26px;height:26px;background:#3c8bf1;border-radius:50%"></div>
<div class="t" style="left:663.5px;top:667.8px;font-size:18.7px;line-height:37.4px;color:#2d3039;font-weight:400;">Depp Johnny (3)</div>
<div style="position:absolute;left:989px;top:651px;width:218px;height:66px;background:#fff;border:2px solid #e6e7ea;border-radius:13px;box-sizing:border-box"></div>
<div class="t" style="left:1006.0px;top:663.0px;font-size:20.8px;line-height:41.6px;color:#585c65;font-weight:400;">Administrator</div>
<svg style="position:absolute;left:1170px;top:678.5px;" width="18" height="10" viewBox="0 0 18 10" fill="none"><path d="M1.5 1.5 L8.5 8 L15.5 1.5" stroke="#a9abb0" stroke-width="1.3" stroke-linecap="round" stroke-linejoin="round"/></svg>
<div class="t" style="left:1266.5px;top:668.3px;font-size:19.1px;line-height:38.2px;color:#2d3039;font-weight:400;">+919506543991</div>
<div class="t" style="left:1460.0px;top:667.7px;font-size:18.8px;line-height:37.6px;color:#2d3039;font-weight:400;">civasoc789@syswift.com</div>
<div class="t" style="left:1803.5px;top:667.9px;font-size:18.65px;line-height:37.3px;color:#2d3039;font-weight:400;">(GMT +02:00) Europe/Kyiv</div>
<div style="position:absolute;left:2149px;top:667px;width:148px;height:41px;background:#daf0e1;border-radius:13px"></div>
<div class="t" style="left:2160.0px;top:668.7px;font-size:18.8px;line-height:37.6px;color:#3ea370;font-weight:400;">Invite accepted</div>
<svg style="position:absolute;left:2397px;top:671px;" width="29" height="29" viewBox="0 0 28 28" fill="none"><path d="M12.5 1.5 H8.5 A7 7 0 0 0 1.5 8.5 V19.5 A7 7 0 0 0 8.5 26.5 H19.5 A7 7 0 0 0 26.5 19.5 V15.5" stroke="#23252d" stroke-width="2" stroke-linecap="round"/><path d="M8.85 14.77 L20.81 2.81 A3.8 3.8 0 0 1 26.19 8.19 L14.23 20.15 Q13 21.4 11.2 21.6 L8.8 21.9 Q7.9 22 8 21.1 L8.2 18.5 Q8.4 16 8.85 14.77 Z" stroke="#23252d" stroke-width="2" stroke-linejoin="round"/><path d="M18.58 5.04 L23.96 10.42" stroke="#23252d" stroke-width="2"/></svg>
<svg style="position:absolute;left:2456px;top:670px;" width="27" height="29" viewBox="0 0 27 29" fill="none"><path d="M0.8 6.8 Q13.5 5.2 26.2 6.8" stroke="#ec4e6e" stroke-width="2" stroke-linecap="round"/><path d="M9 5.6 V3.5 Q9 1 11.5 1 H15.5 Q18 1 18 3.5 V5.6" stroke="#ec4e6e" stroke-width="2"/><path d="M4.2 10.5 L5.6 23.5 Q6 27.5 10 27.5 H17 Q21 27.5 21.4 23.5 L22.8 10.5" stroke="#ec4e6e" stroke-width="2" stroke-linecap="round"/><path d="M10.2 15.3h6.8M11 20.5h5.4" stroke="#ec4e6e" stroke-width="2" stroke-linecap="round"/></svg>
<div style="position:absolute;left:433px;top:745px;width:2086px;height:91px;background:#fff;border:1.6px solid #e6e8ec;border-radius:12px;box-sizing:border-box"></div>
<div style="position:absolute;left:453px;top:774px;width:31px;height:31px;background:#fff;border:1.5px solid #eceef2;border-radius:7px;box-sizing:border-box"></div>
<div class="t" style="left:564.0px;top:770.8px;font-size:18.7px;line-height:37.4px;color:#2d3039;font-weight:400;">10</div>
<div style="position:absolute;left:628px;top:777.5px;width:26px;height:26px;background:#79b165;border-radius:50%"></div>
<div class="t" style="left:663.5px;top:770.8px;font-size:18.7px;line-height:37.4px;color:#2d3039;font-weight:400;">Evans Christopher Robert (10)</div>
<div style="position:absolute;left:989px;top:754px;width:218px;height:66px;background:#fff;border:2px solid #e6e7ea;border-radius:13px;box-sizing:border-box"></div>
<div class="t" style="left:1006.0px;top:766.0px;font-size:20.8px;line-height:41.6px;color:#585c65;font-weight:400;">Employee</div>
<svg style="position:absolute;left:1170px;top:781.5px;" width="18" height="10" viewBox="0 0 18 10" fill="none"><path d="M1.5 1.5 L8.5 8 L15.5 1.5" stroke="#a9abb0" stroke-width="1.3" stroke-linecap="round" stroke-linejoin="round"/></svg>
<div class="t" style="left:1266.5px;top:771.3px;font-size:19.1px;line-height:38.2px;color:#2d3039;font-weight:400;">+33757130289</div>
<div class="t" style="left:1460.0px;top:770.7px;font-size:18.8px;line-height:37.6px;color:#2d3039;font-weight:400;">tawim97125@tagbert.com</div>
<div class="t" style="left:1803.5px;top:770.9px;font-size:18.65px;line-height:37.3px;color:#2d3039;font-weight:400;">(GMT +02:00) Europe/Kyiv</div>
<div style="position:absolute;left:2149px;top:770px;width:148px;height:41px;background:#daf0e1;border-radius:13px"></div>
<div class="t" style="left:2160.0px;top:771.7px;font-size:18.8px;line-height:37.6px;color:#3ea370;font-weight:400;">Invite accepted</div>
<svg style="position:absolute;left:2397px;top:774px;" width="29" height="29" viewBox="0 0 28 28" fill="none"><path d="M12.5 1.5 H8.5 A7 7 0 0 0 1.5 8.5 V19.5 A7 7 0 0 0 8.5 26.5 H19.5 A7 7 0 0 0 26.5 19.5 V15.5" stroke="#23252d" stroke-width="2" stroke-linecap="round"/><path d="M8.85 14.77 L20.81 2.81 A3.8 3.8 0 0 1 26.19 8.19 L14.23 20.15 Q13 21.4 11.2 21.6 L8.8 21.9 Q7.9 22 8 21.1 L8.2 18.5 Q8.4 16 8.85 14.77 Z" stroke="#23252d" stroke-width="2" stroke-linejoin="round"/><path d="M18.58 5.04 L23.96 10.42" stroke="#23252d" stroke-width="2"/></svg>
<svg style="position:absolute;left:2456px;top:773px;" width="27" height="29" viewBox="0 0 27 29" fill="none"><path d="M0.8 6.8 Q13.5 5.2 26.2 6.8" stroke="#ec4e6e" stroke-width="2" stroke-linecap="round"/><path d="M9 5.6 V3.5 Q9 1 11.5 1 H15.5 Q18 1 18 3.5 V5.6" stroke="#ec4e6e" stroke-width="2"/><path d="M4.2 10.5 L5.6 23.5 Q6 27.5 10 27.5 H17 Q21 27.5 21.4 23.5 L22.8 10.5" stroke="#ec4e6e" stroke-width="2" stroke-linecap="round"/><path d="M10.2 15.3h6.8M11 20.5h5.4" stroke="#ec4e6e" stroke-width="2" stroke-linecap="round"/></svg>
<div style="position:absolute;left:433px;top:849px;width:2086px;height:91px;background:#fff;border:1.6px solid #e6e8ec;border-radius:12px;box-sizing:border-box"></div>
<div style="position:absolute;left:453px;top:878px;width:31px;height:31px;background:#fff;border:1.5px solid #eceef2;border-radius:7px;box-sizing:border-box"></div>
<div class="t" style="left:564.0px;top:874.8px;font-size:18.7px;line-height:37.4px;color:#2d3039;font-weight:400;">19</div>
<div style="position:absolute;left:628px;top:881.5px;width:26px;height:26px;background:#d3609e;border-radius:50%"></div>
<div class="t" style="left:663.5px;top:874.8px;font-size:18.7px;line-height:37.4px;color:#2d3039;font-weight:400;">Farrell Colin (19)</div>
<div style="position:absolute;left:989px;top:858px;width:218px;height:66px;background:#fff;border:2px solid #e6e7ea;border-radius:13px;box-sizing:border-box"></div>
<div class="t" style="left:1006.0px;top:870.0px;font-size:20.8px;line-height:41.6px;color:#585c65;font-weight:400;">Employee</div>
<svg style="position:absolute;left:1170px;top:885.5px;" width="18" height="10" viewBox="0 0 18 10" fill="none"><path d="M1.5 1.5 L8.5 8 L15.5 1.5" stroke="#a9abb0" stroke-width="1.3" stroke-linecap="round" stroke-linejoin="round"/></svg>
<div class="t" style="left:1266.5px;top:875.3px;font-size:19.1px;line-height:38.2px;color:#2d3039;font-weight:400;">+380972710078</div>
<div class="t" style="left:1803.5px;top:874.9px;font-size:18.65px;line-height:37.3px;color:#2d3039;font-weight:400;">(GMT +02:00) Europe/Kyiv</div>
<div style="position:absolute;left:2149px;top:874px;width:138px;height:41px;background:#dce2ef;border-radius:13px"></div>
<div class="t" style="left:2160.0px;top:875.7px;font-size:18.8px;line-height:37.6px;color:#4d5fae;font-weight:400;">Invite pending</div>
<svg style="position:absolute;left:2397px;top:878px;" width="29" height="29" viewBox="0 0 28 28" fill="none"><path d="M12.5 1.5 H8.5 A7 7 0 0 0 1.5 8.5 V19.5 A7 7 0 0 0 8.5 26.5 H19.5 A7 7 0 0 0 26.5 19.5 V15.5" stroke="#23252d" stroke-width="2" stroke-linecap="round"/><path d="M8.85 14.77 L20.81 2.81 A3.8 3.8 0 0 1 26.19 8.19 L14.23 20.15 Q13 21.4 11.2 21.6 L8.8 21.9 Q7.9 22 8 21.1 L8.2 18.5 Q8.4 16 8.85 14.77 Z" stroke="#23252d" stroke-width="2" stroke-linejoin="round"/><path d="M18.58 5.04 L23.96 10.42" stroke="#23252d" stroke-width="2"/></svg>
<svg style="position:absolute;left:2456px;top:877px;" width="27" height="29" viewBox="0 0 27 29" fill="none"><path d="M0.8 6.8 Q13.5 5.2 26.2 6.8" stroke="#ec4e6e" stroke-width="2" stroke-linecap="round"/><path d="M9 5.6 V3.5 Q9 1 11.5 1 H15.5 Q18 1 18 3.5 V5.6" stroke="#ec4e6e" stroke-width="2"/><path d="M4.2 10.5 L5.6 23.5 Q6 27.5 10 27.5 H17 Q21 27.5 21.4 23.5 L22.8 10.5" stroke="#ec4e6e" stroke-width="2" stroke-linecap="round"/><path d="M10.2 15.3h6.8M11 20.5h5.4" stroke="#ec4e6e" stroke-width="2" stroke-linecap="round"/></svg>
<div style="position:absolute;left:433px;top:952px;width:2086px;height:91px;background:#fff;border:1.6px solid #e6e8ec;border-radius:12px;box-sizing:border-box"></div>
<div style="position:absolute;left:453px;top:981px;width:31px;height:31px;background:#fff;border:1.5px solid #eceef2;border-radius:7px;box-sizing:border-box"></div>
<div class="t" style="left:564.0px;top:977.8px;font-size:18.7px;line-height:37.4px;color:#2d3039;font-weight:400;">20</div>
<div style="position:absolute;left:628px;top:984.5px;width:26px;height:26px;background:#4a2d62;border-radius:50%"></div>
<div class="t" style="left:663.5px;top:977.8px;font-size:18.7px;line-height:37.4px;color:#2d3039;font-weight:400;">Fett Boba (20)</div>
<div style="position:absolute;left:989px;top:961px;width:218px;height:66px;background:#fff;border:2px solid #e6e7ea;border-radius:13px;box-sizing:border-box"></div>
<div class="t" style="left:1006.0px;top:973.0px;font-size:20.8px;line-height:41.6px;color:#585c65;font-weight:400;">Employee</div>
<svg style="position:absolute;left:1170px;top:988.5px;" width="18" height="10" viewBox="0 0 18 10" fill="none"><path d="M1.5 1.5 L8.5 8 L15.5 1.5" stroke="#a9abb0" stroke-width="1.3" stroke-linecap="round" stroke-linejoin="round"/></svg>
<div class="t" style="left:1266.5px;top:978.3px;font-size:19.1px;line-height:38.2px;color:#2d3039;font-weight:400;">+37255541554</div>
<div class="t" style="left:1803.5px;top:977.9px;font-size:18.65px;line-height:37.3px;color:#2d3039;font-weight:400;">(GMT +02:00) Europe/Kyiv</div>
<div style="position:absolute;left:2149px;top:977px;width:138px;height:41px;background:#dce2ef;border-radius:13px"></div>
<div class="t" style="left:2160.0px;top:978.7px;font-size:18.8px;line-height:37.6px;color:#4d5fae;font-weight:400;">Invite pending</div>
<svg style="position:absolute;left:2397px;top:981px;" width="29" height="29" viewBox="0 0 28 28" fill="none"><path d="M12.5 1.5 H8.5 A7 7 0 0 0 1.5 8.5 V19.5 A7 7 0 0 0 8.5 26.5 H19.5 A7 7 0 0 0 26.5 19.5 V15.5" stroke="#23252d" stroke-width="2" stroke-linecap="round"/><path d="M8.85 14.77 L20.81 2.81 A3.8 3.8 0 0 1 26.19 8.19 L14.23 20.15 Q13 21.4 11.2 21.6 L8.8 21.9 Q7.9 22 8 21.1 L8.2 18.5 Q8.4 16 8.85 14.77 Z" stroke="#23252d" stroke-width="2" stroke-linejoin="round"/><path d="M18.58 5.04 L23.96 10.42" stroke="#23252d" stroke-width="2"/></svg>
<svg style="position:absolute;left:2456px;top:980px;" width="27" height="29" viewBox="0 0 27 29" fill="none"><path d="M0.8 6.8 Q13.5 5.2 26.2 6.8" stroke="#ec4e6e" stroke-width="2" stroke-linecap="round"/><path d="M9 5.6 V3.5 Q9 1 11.5 1 H15.5 Q18 1 18 3.5 V5.6" stroke="#ec4e6e" stroke-width="2"/><path d="M4.2 10.5 L5.6 23.5 Q6 27.5 10 27.5 H17 Q21 27.5 21.4 23.5 L22.8 10.5" stroke="#ec4e6e" stroke-width="2" stroke-linecap="round"/><path d="M10.2 15.3h6.8M11 20.5h5.4" stroke="#ec4e6e" stroke-width="2" stroke-linecap="round"/></svg>
<div style="position:absolute;left:433px;top:1055px;width:2086px;height:91px;background:#fff;border:1.6px solid #e6e8ec;border-radius:12px;box-sizing:border-box"></div>
<div style="position:absolute;left:453px;top:1084px;width:31px;height:31px;background:#fff;border:1.5px solid #eceef2;border-radius:7px;box-sizing:border-box"></div>
<div style="position:absolute;left:628px;top:1087.5px;width:26px;height:26px;background:#6f6f6f;border-radius:50%"></div>
<div class="t" style="left:663.5px;top:1080.8px;font-size:18.7px;line-height:37.4px;color:#2d3039;font-weight:400;">Gggg Gggg</div>
<div style="position:absolute;left:989px;top:1064px;width:218px;height:66px;background:#fff;border:2px solid #e6e7ea;border-radius:13px;box-sizing:border-box"></div>
<div class="t" style="left:1006.0px;top:1076.0px;font-size:20.8px;line-height:41.6px;color:#585c65;font-weight:400;">Employee</div>
<svg style="position:absolute;left:1170px;top:1091.5px;" width="18" height="10" viewBox="0 0 18 10" fill="none"><path d="M1.5 1.5 L8.5 8 L15.5 1.5" stroke="#a9abb0" stroke-width="1.3" stroke-linecap="round" stroke-linejoin="round"/></svg>
<div class="t" style="left:1803.5px;top:1080.9px;font-size:18.65px;line-height:37.3px;color:#2d3039;font-weight:400;">(GMT +02:00) Europe/Kyiv</div>
<div style="position:absolute;left:2149px;top:1080px;width:111px;height:41px;background:#fdebdd;border-radius:13px"></div>
<div class="t" style="left:2160.0px;top:1081.7px;font-size:18.8px;line-height:37.6px;color:#eb9c5c;font-weight:400;">Not invited</div>
<svg style="position:absolute;left:2397px;top:1084px;" width="29" height="29" viewBox="0 0 28 28" fill="none"><path d="M12.5 1.5 H8.5 A7 7 0 0 0 1.5 8.5 V19.5 A7 7 0 0 0 8.5 26.5 H19.5 A7 7 0 0 0 26.5 19.5 V15.5" stroke="#23252d" stroke-width="2" stroke-linecap="round"/><path d="M8.85 14.77 L20.81 2.81 A3.8 3.8 0 0 1 26.19 8.19 L14.23 20.15 Q13 21.4 11.2 21.6 L8.8 21.9 Q7.9 22 8 21.1 L8.2 18.5 Q8.4 16 8.85 14.77 Z" stroke="#23252d" stroke-width="2" stroke-linejoin="round"/><path d="M18.58 5.04 L23.96 10.42" stroke="#23252d" stroke-width="2"/></svg>
<svg style="position:absolute;left:2457px;top:1084px;" width="25" height="29" viewBox="0 0 25 29" fill="none"><path d="M1 5.2 H19.5 A4 4 0 0 1 23.5 9.2 V14.3" stroke="#5366b9" stroke-width="2" stroke-linecap="round"/><path d="M5.8 0.5 L1 5.2 L5.8 10" stroke="#5366b9" stroke-width="2" stroke-linecap="round" stroke-linejoin="round"/><path d="M1 14 V19.2 A4 4 0 0 0 5 23.2 H24" stroke="#5366b9" stroke-width="2" stroke-linecap="round"/><path d="M19.2 18.5 L24 23.2 L19.2 28" stroke="#5366b9" stroke-width="2" stroke-linecap="round" stroke-linejoin="round"/></svg>
<div style="position:absolute;left:433px;top:1158px;width:2086px;height:91px;background:#fff;border:1.6px solid #e6e8ec;border-radius:12px;box-sizing:border-box"></div>
<div style="position:absolute;left:453px;top:1187px;width:31px;height:31px;background:#fff;border:1.5px solid #eceef2;border-radius:7px;box-sizing:border-box"></div>
<div style="position:absolute;left:628px;top:1190.5px;width:26px;height:26px;background:#4b2d5f;border-radius:50%"></div>
<div class="t" style="left:663.5px;top:1183.8px;font-size:18.7px;line-height:37.4px;color:#2d3039;font-weight:400;">Granger Hermione</div>
<div style="position:absolute;left:989px;top:1167px;width:218px;height:66px;background:#fff;border:2px solid #e6e7ea;border-radius:13px;box-sizing:border-box"></div>
<div class="t" style="left:1006.0px;top:1179.0px;font-size:20.8px;line-height:41.6px;color:#585c65;font-weight:400;">Employee</div>
<svg style="position:absolute;left:1170px;top:1194.5px;" width="18" height="10" viewBox="0 0 18 10" fill="none"><path d="M1.5 1.5 L8.5 8 L15.5 1.5" stroke="#a9abb0" stroke-width="1.3" stroke-linecap="round" stroke-linejoin="round"/></svg>
<div class="t" style="left:1803.5px;top:1183.9px;font-size:18.65px;line-height:37.3px;color:#2d3039;font-weight:400;">(GMT +02:00) Europe/Kyiv</div>
<div style="position:absolute;left:2149px;top:1183px;width:111px;height:41px;background:#fdebdd;border-radius:13px"></div>
<div class="t" style="left:2160.0px;top:1184.7px;font-size:18.8px;line-height:37.6px;color:#eb9c5c;font-weight:400;">Not invited</div>
<svg style="position:absolute;left:2397px;top:1187px;" width="29" height="29" viewBox="0 0 28 28" fill="none"><path d="M12.5 1.5 H8.5 A7 7 0 0 0 1.5 8.5 V19.5 A7 7 0 0 0 8.5 26.5 H19.5 A7 7 0 0 0 26.5 19.5 V15.5" stroke="#23252d" stroke-width="2" stroke-linecap="round"/><path d="M8.85 14.77 L20.81 2.81 A3.8 3.8 0 0 1 26.19 8.19 L14.23 20.15 Q13 21.4 11.2 21.6 L8.8 21.9 Q7.9 22 8 21.1 L8.2 18.5 Q8.4 16 8.85 14.77 Z" stroke="#23252d" stroke-width="2" stroke-linejoin="round"/><path d="M18.58 5.04 L23.96 10.42" stroke="#23252d" stroke-width="2"/></svg>
<svg style="position:absolute;left:2456px;top:1186px;" width="27" height="29" viewBox="0 0 27 29" fill="none"><path d="M0.8 6.8 Q13.5 5.2 26.2 6.8" stroke="#ec4e6e" stroke-width="2" stroke-linecap="round"/><path d="M9 5.6 V3.5 Q9 1 11.5 1 H15.5 Q18 1 18 3.5 V5.6" stroke="#ec4e6e" stroke-width="2"/><path d="M4.2 10.5 L5.6 23.5 Q6 27.5 10 27.5 H17 Q21 27.5 21.4 23.5 L22.8 10.5" stroke="#ec4e6e" stroke-width="2" stroke-linecap="round"/><path d="M10.2 15.3h6.8M11 20.5h5.4" stroke="#ec4e6e" stroke-width="2" stroke-linecap="round"/></svg>
<div style="position:absolute;left:433px;top:1261px;width:2086px;height:91px;background:#fff;border:1.6px solid #e6e8ec;border-radius:12px;box-sizing:border-box"></div>
<div style="position:absolute;left:453px;top:1290px;width:31px;height:31px;background:#fff;border:1.5px solid #eceef2;border-radius:7px;box-sizing:border-box"></div>
<div style="position:absolute;left:628px;top:1293.5px;width:26px;height:26px;background:#9b6fc8;border-radius:50%"></div>
<div class="t" style="left:663.5px;top:1286.8px;font-size:18.7px;line-height:37.4px;color:#2d3039;font-weight:400;">Holland Thomas</div>
<div style="position:absolute;left:989px;top:1270px;width:218px;height:66px;background:#fff;border:2px solid #e6e7ea;border-radius:13px;box-sizing:border-box"></div>
<div class="t" style="left:1006.0px;top:1282.0px;font-size:20.8px;line-height:41.6px;color:#585c65;font-weight:400;">Employee</div>
<svg style="position:absolute;left:1170px;top:1297.5px;" width="18" height="10" viewBox="0 0 18 10" fill="none"><path d="M1.5 1.5 L8.5 8 L15.5 1.5" stroke="#a9abb0" stroke-width="1.3" stroke-linecap="round" stroke-linejoin="round"/></svg>
<div class="t" style="left:1803.5px;top:1286.9px;font-size:18.65px;line-height:37.3px;color:#2d3039;font-weight:400;">(GMT +02:00) Europe/Kyiv</div>
<div style="position:absolute;left:2149px;top:1286px;width:111px;height:41px;background:#fdebdd;border-radius:13px"></div>
<div class="t" style="left:2160.0px;top:1287.7px;font-size:18.8px;line-height:37.6px;color:#eb9c5c;font-weight:400;">Not invited</div>
<svg style="position:absolute;left:2397px;top:1290px;" width="29" height="29" viewBox="0 0 28 28" fill="none"><path d="M12.5 1.5 H8.5 A7 7 0 0 0 1.5 8.5 V19.5 A7 7 0 0 0 8.5 26.5 H19.5 A7 7 0 0 0 26.5 19.5 V15.5" stroke="#23252d" stroke-width="2" stroke-linecap="round"/><path d="M8.85 14.77 L20.81 2.81 A3.8 3.8 0 0 1 26.19 8.19 L14.23 20.15 Q13 21.4 11.2 21.6 L8.8 21.9 Q7.9 22 8 21.1 L8.2 18.5 Q8.4 16 8.85 14.77 Z" stroke="#23252d" stroke-width="2" stroke-linejoin="round"/><path d="M18.58 5.04 L23.96 10.42" stroke="#23252d" stroke-width="2"/></svg>
<svg style="position:absolute;left:2456px;top:1289px;" width="27" height="29" viewBox="0 0 27 29" fill="none"><path d="M0.8 6.8 Q13.5 5.2 26.2 6.8" stroke="#ec4e6e" stroke-width="2" stroke-linecap="round"/><path d="M9 5.6 V3.5 Q9 1 11.5 1 H15.5 Q18 1 18 3.5 V5.6" stroke="#ec4e6e" stroke-width="2"/><path d="M4.2 10.5 L5.6 23.5 Q6 27.5 10 27.5 H17 Q21 27.5 21.4 23.5 L22.8 10.5" stroke="#ec4e6e" stroke-width="2" stroke-linecap="round"/><path d="M10.2 15.3h6.8M11 20.5h5.4" stroke="#ec4e6e" stroke-width="2" stroke-linecap="round"/></svg>
<div style="position:absolute;left:2440px;top:1232px;width:87px;height:87px;background:#3a6ee6;border-radius:50%;box-shadow:0 6px 16px rgba(40,60,120,0.12)"></div>
<svg style="position:absolute;left:2458px;top:1256px;" width="48" height="42" viewBox="0 0 48 42" fill="none"><path d="M3 5 L45 2 L46 30 L30 30.5 L26 38 L21 31 L4 32 Z" fill="#fff"/></svg>
</body></html>
